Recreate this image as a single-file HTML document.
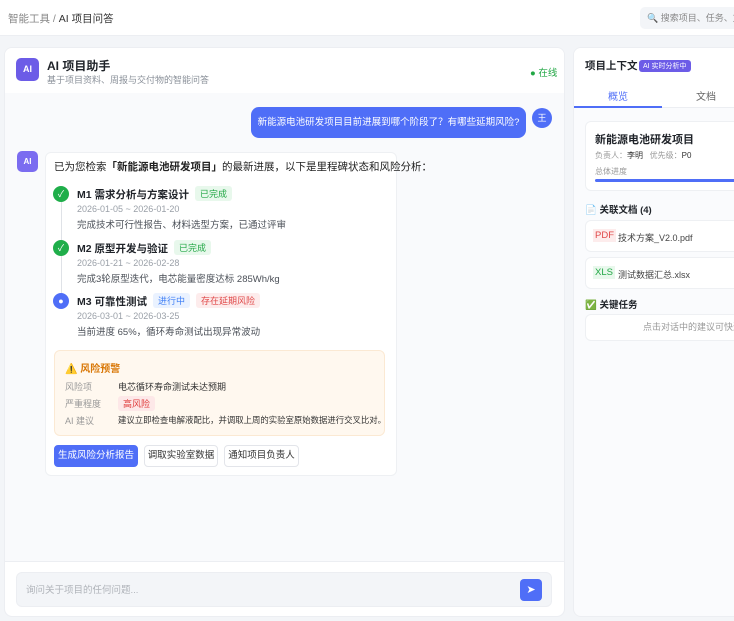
<!DOCTYPE html>
<html><head><meta charset="utf-8"><style>
*{box-sizing:border-box;margin:0;padding:0}
body{width:734px;height:621px;overflow:hidden;background:#f3f5f8;font-family:"Liberation Sans","Noto Sans CJK SC",sans-serif;color:#1f2329;position:relative;font-size:12px}
.abs{position:absolute;white-space:nowrap}
.top{left:0;top:0;width:734px;height:36px;background:#fff;border-bottom:1px solid #eceef2}
.chat{left:4px;top:47px;width:561px;height:570px;background:#f9fafc;border:1px solid #eceef2;border-radius:8px;overflow:hidden}
.tag{display:inline-block;font-size:9px;font-weight:normal;padding:1px 5px;border-radius:3px;margin-left:6px;vertical-align:1px}
.dot{position:absolute;left:53px;width:16px;height:16px;border-radius:50%;color:#fff;font-size:9px;text-align:center;line-height:16px}
.ms{position:absolute;left:77px;white-space:nowrap}
.ms b{font-size:10.5px}
.ms .d{font-size:9px;color:#9aa0a8;margin-top:2px}
.ms .t{font-size:9.5px;color:#4b5058;margin-top:3px}
.btn{position:absolute;top:445px;height:22px;border:1px solid #e3e5ea;border-radius:4px;background:#fff;font-size:9.5px;line-height:20px;text-align:center;color:#333;white-space:nowrap}
</style></head><body>
<div class="abs top">
 <div class="abs" style="left:8px;top:11px;font-size:10.5px;color:#888">智能工具 / <span style="color:#333">AI 项目问答</span></div>
 <div class="abs" style="left:640px;top:7px;width:100px;height:22px;background:#f3f5f8;border-radius:5px;font-size:9px;color:#888;line-height:22px;padding-left:7px;overflow:hidden">🔍 搜索项目、任务、文</div>
</div>
<div class="abs chat">
 <div class="abs" style="left:0;top:0;width:561px;height:45px;background:#fff"></div>
 <div class="abs" style="left:11px;top:10px;width:23px;height:23px;border-radius:5px;background:#6c5ce7;color:#fff;font-size:9px;font-weight:bold;text-align:center;line-height:23px">AI</div>
 <div class="abs" style="left:42px;top:9px;font-size:12px;font-weight:bold">AI 项目助手</div>
 <div class="abs" style="left:42px;top:25px;font-size:9px;color:#8a9099">基于项目资料、周报与交付物的智能问答</div>
 <div class="abs" style="left:525px;top:17px;font-size:9.5px;color:#22a745">● 在线</div>
 <div class="abs" style="left:246px;top:59px;width:275px;height:31px;background:#4f6ef7;border-radius:8px;color:#fff;font-size:9.5px;line-height:31px;text-align:center">新能源电池研发项目目前进展到哪个阶段了？有哪些延期风险?</div>
 <div class="abs" style="left:527px;top:60px;width:20px;height:20px;border-radius:50%;background:#4f6ef7;color:#fff;font-size:9px;text-align:center;line-height:20px">王</div>
 <div class="abs" style="left:12px;top:103px;width:21px;height:21px;border-radius:5px;background:#7b6cf0;color:#fff;font-size:8px;font-weight:bold;text-align:center;line-height:21px">AI</div>
 <div class="abs" style="left:40px;top:104px;width:352px;height:324px;background:#fff;border:1px solid #eef0f3;border-radius:6px"></div>
</div>
<div class="abs" style="left:54px;top:159px;font-size:10.5px;color:#222">已为您检索<b>「新能源电池研发项目」</b>的最新进展，以下是里程碑状态和风险分析：</div>
<div class="abs" style="left:61px;top:200px;width:1px;height:100px;background:#dfe2e7"></div>
<div class="dot" style="top:186px;background:#1fae4a">✓</div>
<div class="dot" style="top:240px;background:#1fae4a">✓</div>
<div class="dot" style="top:293px;background:#4f6ef7">●</div>
<div class="ms" style="top:186px"><b>M1 需求分析与方案设计</b><span class="tag" style="background:#e8f8ec;color:#22a745">已完成</span><div class="d">2026-01-05 ~ 2026-01-20</div><div class="t">完成技术可行性报告、材料选型方案，已通过评审</div></div>
<div class="ms" style="top:240px"><b>M2 原型开发与验证</b><span class="tag" style="background:#e8f8ec;color:#22a745">已完成</span><div class="d">2026-01-21 ~ 2026-02-28</div><div class="t">完成3轮原型迭代，电芯能量密度达标 285Wh/kg</div></div>
<div class="ms" style="top:293px"><b>M3 可靠性测试</b><span class="tag" style="background:#eaf2ff;color:#3d7ef5">进行中</span><span class="tag" style="background:#fdecec;color:#e04848">存在延期风险</span><div class="d">2026-03-01 ~ 2026-03-25</div><div class="t">当前进度 65%，循环寿命测试出现异常波动</div></div>
<div class="abs" style="left:54px;top:350px;width:331px;height:86px;background:#fff8ef;border:1px solid #fbe9d3;border-radius:6px;font-size:9px">
 <div class="abs" style="left:10px;top:9px;font-weight:bold;color:#d97706;font-size:10px">⚠️ 风险预警</div>
 <div class="abs" style="left:10px;top:29px;color:#999">风险项</div><div class="abs" style="left:63px;top:29px;color:#333">电芯循环寿命测试未达预期</div>
 <div class="abs" style="left:10px;top:46px;color:#999">严重程度</div><div class="abs" style="left:63px;top:45px;color:#e03a3a;background:#fde8e8;padding:1px 5px;border-radius:3px">高风险</div>
 <div class="abs" style="left:10px;top:63px;color:#999">AI 建议</div><div class="abs" style="left:63px;top:63px;color:#333;font-size:8.4px">建议立即检查电解液配比，并调取上周的实验室原始数据进行交叉比对。</div>
</div>
<div class="btn" style="left:54px;width:84px;background:#4f6ef7;color:#fff;border-color:#4f6ef7">生成风险分析报告</div>
<div class="btn" style="left:144px;width:74px">调取实验室数据</div>
<div class="btn" style="left:224px;width:75px">通知项目负责人</div>
<div class="abs" style="left:5px;top:561px;width:559px;height:55px;background:#fff;border-top:1px solid #eceef2;border-radius:0 0 8px 8px"></div>
<div class="abs" style="left:16px;top:572px;width:536px;height:35px;background:#f3f5f8;border:1px solid #eceef2;border-radius:6px;font-size:9.5px;color:#b0b4ba;line-height:35px;padding-left:9px">询问关于项目的任何问题...</div>
<div class="abs" style="left:520px;top:579px;width:22px;height:22px;background:#4f6ef7;border-radius:4px;color:#fff;font-size:11px;text-align:center;line-height:22px">➤</div>
<div class="abs" style="left:573px;top:47px;width:170px;height:570px;background:#fafbfd;border:1px solid #eceef2;border-radius:8px;overflow:hidden">
 <div class="abs" style="left:0;top:0;width:170px;height:60px;background:#fff;border-bottom:1px solid #eceef2"></div>
 <div class="abs" style="left:11px;top:10px;font-size:10.5px;font-weight:bold">项目上下文</div>
 <div class="abs" style="left:65px;top:12px;background:#6c5ce7;color:#fff;font-size:7px;padding:1px 4px;border-radius:3px">AI 实时分析中</div>
 <div class="abs" style="left:34px;top:40px;font-size:10px;color:#4f6ef7">概览</div>
 <div class="abs" style="left:122px;top:40px;font-size:10px;color:#666">文档</div>
 <div class="abs" style="left:0;top:58px;width:88px;height:2px;background:#4f6ef7"></div>
 <div class="abs" style="left:11px;top:73px;width:170px;height:70px;background:#fff;border:1px solid #eef0f3;border-radius:6px">
  <div class="abs" style="left:9px;top:9px;font-size:11px;font-weight:bold">新能源电池研发项目</div>
  <div class="abs" style="left:9px;top:28px;font-size:8px;color:#999">负责人：<span style="color:#333">李明</span>&nbsp;&nbsp; 优先级：<span style="color:#333">P0</span></div>
  <div class="abs" style="left:9px;top:44px;font-size:8px;color:#999">总体进度</div>
  <div class="abs" style="left:9px;top:57px;width:160px;height:3px;background:#4f6ef7;border-radius:2px"></div>
 </div>
 <div class="abs" style="left:11px;top:154px;font-size:9.5px;font-weight:bold">📄 关联文档 (4)</div>
 <div class="abs" style="left:11px;top:172px;width:170px;height:32px;background:#fff;border:1px solid #eef0f3;border-radius:6px"><span class="abs" style="left:7px;top:8px;font-size:9.5px;color:#e04848;background:#fdecec;padding:1px 2px">PDF</span><span class="abs" style="left:32px;top:10px;font-size:9px;color:#444">技术方案_V2.0.pdf</span></div>
 <div class="abs" style="left:11px;top:209px;width:170px;height:32px;background:#fff;border:1px solid #eef0f3;border-radius:6px"><span class="abs" style="left:7px;top:8px;font-size:9.5px;color:#22a745;background:#e8f8ec;padding:1px 2px">XLS</span><span class="abs" style="left:32px;top:10px;font-size:9px;color:#444">测试数据汇总.xlsx</span></div>
 <div class="abs" style="left:11px;top:249px;font-size:9.5px;font-weight:bold">✅ 关键任务</div>
 <div class="abs" style="left:11px;top:266px;width:170px;height:27px;background:#fff;border:1px solid #eef0f3;border-radius:6px;font-size:9px;color:#999;line-height:25px;padding-left:57px">点击对话中的建议可快速</div>
</div>
</body></html>
